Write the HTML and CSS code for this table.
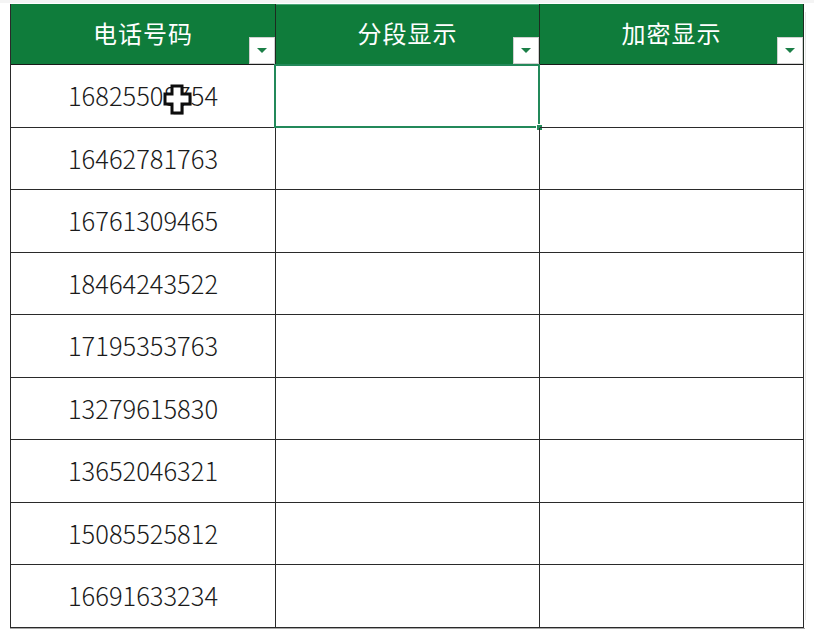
FILE: index.html
```html
<!DOCTYPE html>
<html lang="zh-CN">
<head>
<meta charset="utf-8">
<title>电话号码</title>
<link rel="stylesheet" href="styles.css">
</head>
<body>
<div class="sheet">
  <div class="head">电话号码<span class="filter"></span></div>
  <div class="head head-sel">分段显示<span class="filter"></span></div>
  <div class="head">加密显示<span class="filter"></span></div>

  <div class="cell num">16825508754
    <svg class="cursor" width="30" height="32" viewBox="0 0 30 32">
      <polygon points="9,2 19,2 19,10 27,10 27,20 19,20 19,29 9,29 9,20 2,20 2,10 9,10" fill="#000" transform="translate(1.5,1.5)" opacity="0.4"/>
      <polygon points="9,2 19,2 19,10 27,10 27,20 19,20 19,29 9,29 9,20 2,20 2,10 9,10" fill="#fff" stroke="#0d0d0d" stroke-width="3" stroke-linejoin="miter"/>
    </svg>
  </div>
  <div class="cell selected"><span class="handle"></span></div>
  <div class="cell"></div>

  <div class="cell num">16462781763</div><div class="cell"></div><div class="cell"></div>
  <div class="cell num">16761309465</div><div class="cell"></div><div class="cell"></div>
  <div class="cell num">18464243522</div><div class="cell"></div><div class="cell"></div>
  <div class="cell num">17195353763</div><div class="cell"></div><div class="cell"></div>
  <div class="cell num">13279615830</div><div class="cell"></div><div class="cell"></div>
  <div class="cell num">13652046321</div><div class="cell"></div><div class="cell"></div>
  <div class="cell num">15085525812</div><div class="cell"></div><div class="cell"></div>
  <div class="cell num">16691633234</div><div class="cell"></div><div class="cell"></div>
</div>
</body>
</html>
```
FILE: styles.css
```css
html, body {
  margin: 0;
  padding: 0;
  background: #ffffff;
}
body {
  font-family: "Noto Sans CJK SC", "Noto Sans", sans-serif;
  width: 814px;
  height: 640px;
  overflow: hidden;
  border-top: 3px solid #f4f4f4;
  box-sizing: border-box;
  padding-top: 1px;
}
.sheet {
  margin-left: 10px;
  width: 794px;
  display: grid;
  grid-template-columns: 265px 264px 264px;
  grid-template-rows: 61px repeat(9, 62.5px);
  border-left: 1px solid #2a2a2a;
  box-shadow: 0 1px 0 #a8a8a8, 9px 0 0 -8px #e6e6e6;
}
.head {
  position: relative;
  background: #0f7c3b;
  color: #ffffff;
  font-size: 24px;
  line-height: 58px;
  text-align: center;
  letter-spacing: 1px;
  border-right: 1px solid #1d2a20;
  border-bottom: 1px solid #1a1a1a;
}
.head-sel {
  box-shadow: inset 0 1px 0 #4fa77a;
}
.filter {
  position: absolute;
  right: 1px;
  bottom: 1px;
  width: 24px;
  height: 25px;
  background: #ffffff;
  box-shadow: 0 0 0 1px #d0d0d0;
}
.filter::after {
  content: "";
  position: absolute;
  left: 7px;
  top: 10px;
  border-left: 5px solid transparent;
  border-right: 5px solid transparent;
  border-top: 5px solid #1b7f47;
}
.cell {
  position: relative;
  border-right: 1px solid #2a2a2a;
  border-bottom: 1px solid #2a2a2a;
  font-size: 25.5px;
  font-weight: 300;
  color: #1a1a1a;
  display: flex;
  align-items: center;
  justify-content: center;
}
.num {
  padding-bottom: 2px;
}
.selected::before {
  content: "";
  position: absolute;
  left: -2px;
  top: -1px;
  right: -1px;
  bottom: -1px;
  border: 2px solid #23895a;
}
.handle {
  position: absolute;
  right: -4px;
  bottom: -4px;
  width: 5px;
  height: 5px;
  background: #23895a;
  border: 1px solid #ffffff;
}
.cursor {
  position: absolute;
  left: 152px;
  top: 19px;
}
```
